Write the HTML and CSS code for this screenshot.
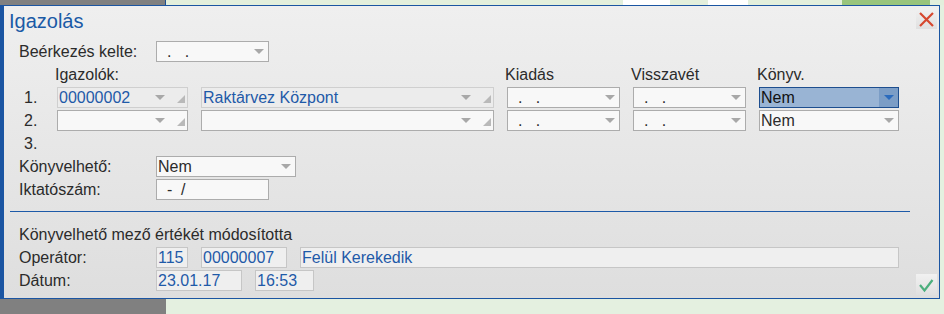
FILE: index.html
```html
<!DOCTYPE html>
<html lang="hu">
<head>
<meta charset="utf-8">
<title>Igazolás</title>
<link rel="stylesheet" href="styles.css">
</head>
<body>
<div class="desktop">
  <div class="strip strip-top"></div>
  <div class="dialog">
    <div class="dlg-header">
      <h1 class="dlg-title">Igazolás</h1>
      <button class="win-btn" type="button" aria-label="Bezárás">
        <svg width="21" height="21" viewBox="0 0 21 21"><path d="M4 5 L17 18 M17 5 L4 18" stroke="#d6482f" stroke-width="2.2" fill="none"/></svg>
      </button>
    </div>

    <div class="form">
      <div class="row">
        <span class="label">Beérkezés kelte:</span>
        <div class="field w113"><span class="val">  .   .</span><span class="arrow"></span></div>
      </div>

      <div class="igazolok">
        <span></span>
        <span class="head">Igazolók:</span>
        <span></span>
        <span class="head">Kiadás</span>
        <span class="head">Visszavét</span>
        <span class="head">Könyv.</span>

        <span class="num">1.</span>
        <div class="field ro lookup"><span class="val blue">00000002</span><span class="arrow"></span><span class="grip"></span></div>
        <div class="field ro lookup"><span class="val blue">Raktárvez Központ</span><span class="arrow"></span><span class="grip"></span></div>
        <div class="field"><span class="val">  .   .</span><span class="arrow"></span></div>
        <div class="field"><span class="val">  .   .</span><span class="arrow"></span></div>
        <div class="field selected"><span class="val">Nem</span><span class="arrow-box"><span class="arrow"></span></span></div>

        <span class="num">2.</span>
        <div class="field lookup"><span class="val"></span><span class="arrow"></span><span class="grip"></span></div>
        <div class="field lookup"><span class="val"></span><span class="arrow"></span><span class="grip"></span></div>
        <div class="field"><span class="val">  .   .</span><span class="arrow"></span></div>
        <div class="field"><span class="val">  .   .</span><span class="arrow"></span></div>
        <div class="field"><span class="val">Nem</span><span class="arrow"></span></div>

        <span class="num">3.</span>
      </div>

      <div class="row">
        <span class="label">Könyvelhető:</span>
        <div class="field w140"><span class="val">Nem</span><span class="arrow"></span></div>
      </div>
      <div class="row">
        <span class="label">Iktatószám:</span>
        <div class="field w113"><span class="val">  -  /</span></div>
      </div>
    </div>

    <div class="separator"></div>

    <div class="form audit">
      <div class="row">
        <span class="label wide">Könyvelhető mező értékét módosította</span>
      </div>
      <div class="row">
        <span class="label">Operátor:</span>
        <div class="fields">
          <div class="field info w32"><span class="val blue">115</span></div>
          <div class="field info w86"><span class="val blue">00000007</span></div>
          <div class="field info w599"><span class="val blue">Felül Kerekedik</span></div>
        </div>
      </div>
      <div class="row last">
        <span class="label">Dátum:</span>
        <div class="fields">
          <div class="field info w86"><span class="val blue">23.01.17</span></div>
          <div class="field info w59"><span class="val blue">16:53</span></div>
        </div>
        <button class="win-btn ok-btn" type="button" aria-label="OK">
          <svg width="21" height="21" viewBox="0 0 21 21"><path d="M4 11 L8.5 16.5 L16.5 6" stroke="#4caf7d" stroke-width="2.2" fill="none" stroke-linejoin="miter"/></svg>
        </button>
      </div>
    </div>
  </div>
  <div class="strip strip-bottom"></div>
</div>
</body>
</html>
```

FILE: styles.css
```css
* { box-sizing: border-box; }

html, body {
  margin: 0;
  padding: 0;
}

body {
  width: 944px;
  height: 314px;
  overflow: hidden;
  background: #e4f0e0;
  font-family: "Liberation Sans", Arial, sans-serif;
  font-size: 16px;
  color: #2b2b2b;
}

.desktop {
  width: 944px;
  height: 314px;
  display: flex;
  flex-direction: column;
}

.strip-top {
  height: 5px;
  background: linear-gradient(to right,
    #808080 0 165px, #1d4f91 165px 166px,
    #e3efdc 166px 623px, #ffffff 623px 670px,
    #e3efdc 670px 708px, #ffffff 708px 748px,
    #e3efdc 748px 842px, #98c47c 842px 930px,
    #e3efdc 930px);
}

.strip-bottom {
  height: 15px;
  background: linear-gradient(to right, #808080 0 166px, #e4f0e0 166px);
}

.dialog {
  width: 940px;
  height: 294px;
  border: 1px solid #1b55a2;
  border-left-width: 4px;
  background: linear-gradient(#efefef, #dedede);
  display: flex;
  flex-direction: column;
}

.dlg-header {
  height: 35px;
  display: flex;
  justify-content: space-between;
  align-items: flex-start;
}

.dlg-title {
  margin: 4px 0 0 5px;
  font-size: 20px;
  font-weight: normal;
  line-height: 23px;
  color: #1a5aa6;
}

.win-btn {
  width: 21px;
  height: 21px;
  padding: 0;
  border: none;
  background: linear-gradient(#f1f1f1, #e0e0e0);
  display: flex;
  align-items: center;
  justify-content: center;
}

.dlg-header .win-btn {
  margin: 2px 2px 0 0;
}

.form {
  padding-left: 15px;
  display: flex;
  flex-direction: column;
  gap: 2px;
}

.row {
  height: 21px;
  display: flex;
  align-items: center;
}

.label {
  width: 137px;
  flex: none;
  line-height: 21px;
  white-space: nowrap;
}

.label.wide { width: auto; }

.igazolok {
  margin-left: 4px;
  display: grid;
  grid-template-columns: 21px 131px 293px 113px 113px 140px;
  grid-auto-rows: 21px;
  column-gap: 13px;
  row-gap: 2px;
  align-items: center;
}

.head {
  margin-left: -2px;
  line-height: 21px;
}

.num {
  padding-left: 1px;
  line-height: 21px;
}

.field {
  height: 21px;
  border: 1px solid #acacac;
  background: #f8f8f8;
  display: flex;
  align-items: center;
  line-height: 19px;
}

.field.ro {
  background: #ececec;
  border-color: #cfcfcf;
}

.field.info {
  background: #efefef;
  border-color: #c6c6c6;
}

.field.selected {
  background: #99b4d4;
  border-color: #1d4e8f;
  color: #111;
}

.w32 { width: 32px; }
.w59 { width: 59px; }
.w86 { width: 86px; }
.w113 { width: 113px; }
.w140 { width: 140px; }
.w599 { width: 599px; }

.val {
  flex: 1;
  min-width: 0;
  padding-left: 1px;
  white-space: pre;
  overflow: hidden;
}

.val.blue { color: #1f5aa8; }

.arrow {
  flex: none;
  width: 0;
  height: 0;
  border-left: 5px solid transparent;
  border-right: 5px solid transparent;
  border-top: 5px solid #a8a8a8;
  margin-right: 4px;
}

.lookup .arrow {
  margin-right: 12px;
}

.grip {
  flex: none;
  width: 0;
  height: 0;
  align-self: flex-end;
  margin: 0 2px 4px 0;
  border-left: 8px solid transparent;
  border-bottom: 8px solid #b9b9b9;
}

.arrow-box {
  flex: none;
  width: 19px;
  align-self: stretch;
  background: #7b9dc6;
  display: flex;
  align-items: center;
  justify-content: center;
}

.arrow-box .arrow {
  margin: 0;
  border-top-color: #2b6bbd;
}

.separator {
  margin: 11px 0 0 6px;
  width: 900px;
  height: 1px;
  background: #1d5aa8;
}

.audit {
  margin-top: 12px;
}

.fields {
  display: flex;
  gap: 13px;
}

.row.last {
  height: 25px;
  align-items: flex-start;
}

.ok-btn {
  margin: 4px 2px 0 auto;
}
```
